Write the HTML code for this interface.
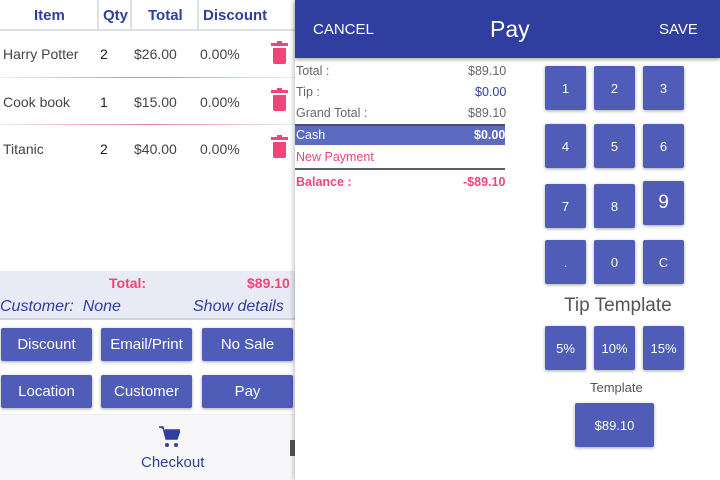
<!DOCTYPE html>
<html><head><style>
*{margin:0;padding:0;box-sizing:border-box}
body{width:720px;height:480px;position:relative;overflow:hidden;background:#fff;font-family:"Liberation Sans",sans-serif}
.a{position:absolute;white-space:nowrap}
.h{color:#303F9F;font-weight:bold;font-size:15px;top:7px}
.c{font-size:14px;color:#444}
.btn{position:absolute;background:#4F5DB8;color:#fff;border-radius:2px;box-shadow:0 1px 3px rgba(0,0,0,.35);display:flex;align-items:center;justify-content:center;font-size:15px}
.k{width:41px;height:44px;font-size:13px}
.vl{position:absolute;top:0;height:30px;width:2px;background:#dde0e4}
.bin{position:absolute;width:13px;height:16px;background:#F0457A;border-radius:0 0 2px 2px}
.bin:before{content:"";position:absolute;left:-2px;top:-5px;width:17px;height:3px;background:#F0457A}
.bin:after{content:"";position:absolute;left:4px;top:-7px;width:5px;height:2px;background:#F0457A}
.r{font-size:12.5px;color:#666}
</style></head><body>
<div class="a h" style="left:34px">Item</div>
<div class="a h" style="left:103px">Qty</div>
<div class="a h" style="left:148px">Total</div>
<div class="a h" style="left:203px">Discount</div>
<div class="vl" style="left:97px"></div><div class="vl" style="left:130px"></div><div class="vl" style="left:197px"></div>
<div class="a" style="left:0;top:29px;width:295px;height:2px;background:#dde0e4"></div>
<div class="a c" style="left:3px;top:46px">Harry Potter</div><div class="a c" style="left:100px;top:46px;color:#222">2</div><div class="a c" style="left:134px;top:46px">$26.00</div><div class="a c" style="left:200px;top:46px">0.00%</div>
<div class="bin" style="left:273px;top:48px"></div>
<div class="a" style="left:0;top:77px;width:295px;height:1px;background:linear-gradient(90deg,#eee,#e87fa0,#eee)"></div>
<div class="a c" style="left:3px;top:94px">Cook book</div><div class="a c" style="left:100px;top:94px;color:#222">1</div><div class="a c" style="left:134px;top:94px">$15.00</div><div class="a c" style="left:200px;top:94px">0.00%</div>
<div class="bin" style="left:273px;top:95px"></div>
<div class="a" style="left:0;top:124px;width:295px;height:1px;background:linear-gradient(90deg,#eee,#e87fa0,#eee)"></div>
<div class="a c" style="left:3px;top:141px">Titanic</div><div class="a c" style="left:100px;top:141px;color:#222">2</div><div class="a c" style="left:134px;top:141px">$40.00</div><div class="a c" style="left:200px;top:141px">0.00%</div>
<div class="bin" style="left:273px;top:142px"></div>
<div class="a" style="left:0;top:271px;width:295px;height:49px;background:#E8EAF6;border-bottom:2px solid #cfd3dc"></div>
<div class="a" style="left:109px;top:275px;color:#F0457A;font-weight:bold;font-size:14px">Total:</div>
<div class="a" style="left:247px;top:275px;color:#F0457A;font-weight:bold;font-size:14px">$89.10</div>
<div class="a" style="left:0;top:298px;color:#303F9F;font-style:italic;font-size:16px">Customer:&nbsp; None</div>
<div class="a" style="left:193px;top:298px;color:#303F9F;font-style:italic;font-size:16px">Show details</div>
<div class="btn" style="left:1px;top:328px;width:91px;height:33px">Discount</div>
<div class="btn" style="left:101px;top:328px;width:91px;height:33px">Email/Print</div>
<div class="btn" style="left:202px;top:328px;width:91px;height:33px">No Sale</div>
<div class="btn" style="left:1px;top:375px;width:91px;height:33px">Location</div>
<div class="btn" style="left:101px;top:375px;width:91px;height:33px">Customer</div>
<div class="btn" style="left:202px;top:375px;width:91px;height:33px">Pay</div>
<div class="a" style="left:0;top:414px;width:295px;height:66px;background:#f7f7f9;border-top:1px solid #eee"></div>
<svg class="a" style="left:159px;top:426px" width="21" height="24" viewBox="0 0 21 24"><path d="M0 1h4l3 12h11l3-9H6" fill="#303F9F" stroke="#303F9F" stroke-width="1.5"/><path d="M5 4h16l-3 9H7z" fill="#303F9F"/><circle cx="8" cy="19" r="2" fill="#303F9F"/><circle cx="17" cy="19" r="2" fill="#303F9F"/></svg>
<div class="a" style="left:141px;top:454px;color:#303F9F;font-size:15px">Checkout</div>
<div class="a" style="left:290px;top:440px;width:5px;height:16px;background:#555"></div>
<div class="a" style="left:295px;top:0;width:425px;height:480px;background:#fff;box-shadow:-2px 0 4px rgba(0,0,0,.2)"></div>
<div class="a" style="left:295px;top:0;width:425px;height:58px;background:#303F9F;box-shadow:0 2px 3px rgba(0,0,0,.3)"></div>
<div class="a" style="left:313px;top:21px;color:#fff;font-size:15px">CANCEL</div>
<div class="a" style="left:490px;top:16px;color:#fff;font-size:23px">Pay</div>
<div class="a" style="left:659px;top:21px;color:#fff;font-size:15px">SAVE</div>
<div class="a r" style="left:296px;top:64px">Total :</div><div class="a r" style="left:468px;top:64px">$89.10</div>
<div class="a r" style="left:296px;top:85px">Tip :</div><div class="a r" style="left:475px;top:85px;color:#303F9F">$0.00</div>
<div class="a r" style="left:296px;top:106px">Grand Total :</div><div class="a r" style="left:468px;top:106px">$89.10</div>
<div class="a" style="left:295px;top:124px;width:210px;height:21px;background:#5C6BC0;border-top:2px solid #4a5160"></div>
<div class="a" style="left:296px;top:128px;color:#fff;font-size:12.5px">Cash</div><div class="a" style="left:474px;top:128px;color:#fff;font-size:12.5px;font-weight:bold">$0.00</div>
<div class="a" style="left:296px;top:150px;color:#F0457A;font-size:12.5px">New Payment</div>
<div class="a" style="left:295px;top:168px;width:210px;height:2px;background:#59606a"></div>
<div class="a" style="left:296px;top:175px;color:#F0457A;font-size:12.5px;font-weight:bold">Balance :</div><div class="a" style="left:463px;top:175px;color:#F0457A;font-size:12.5px;font-weight:bold">-$89.10</div>
<div class="btn k" style="left:545px;top:66px">1</div><div class="btn k" style="left:594px;top:66px">2</div><div class="btn k" style="left:643px;top:66px">3</div>
<div class="btn k" style="left:545px;top:124px">4</div><div class="btn k" style="left:594px;top:124px">5</div><div class="btn k" style="left:643px;top:124px">6</div>
<div class="btn k" style="left:545px;top:184px">7</div><div class="btn k" style="left:594px;top:184px">8</div><div class="btn k" style="left:643px;top:181px;font-size:19px">9</div>
<div class="btn k" style="left:545px;top:240px">.</div><div class="btn k" style="left:594px;top:240px">0</div><div class="btn k" style="left:643px;top:240px">C</div>
<div class="a" style="left:564px;top:295px;color:#555;font-size:19px">Tip Template</div>
<div class="btn k" style="left:545px;top:326px">5%</div><div class="btn k" style="left:594px;top:326px">10%</div><div class="btn k" style="left:643px;top:326px">15%</div>
<div class="a" style="left:590px;top:380px;color:#555;font-size:13px">Template</div>
<div class="btn" style="left:575px;top:403px;width:79px;height:44px;font-size:13px">$89.10</div>
</body></html>
